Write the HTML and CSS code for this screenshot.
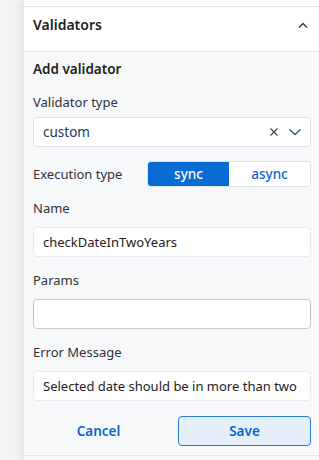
FILE: index.html
```html
<!DOCTYPE HTML>
<html>
<head>
<meta charset="utf-8">
<meta name="viewport" content="width=device-width, initial-scale=1.0">
<title>Validators</title>
<link rel="stylesheet" href="styles.css">
</head>
<body>

<div class="layout">
	<div class="sidebar"></div>

	<div class="panel">
		<div class="panel-top"></div>

		<!-- Заголовок секции -->
		<div class="section-head">
			<span>Validators</span>
			<svg class="caret" width="12" height="8" viewBox="0 0 12 8"><path d="M2 6.5 L6 2.5 L10 6.5" fill="none" stroke="#333" stroke-width="1.3"/></svg>
		</div>

		<div class="section-body">
			<h4>Add validator</h4>

			<div class="field first">
				<label>Validator type</label>
				<div class="select">
					<span class="select-value">custom</span>
					<svg width="10" height="10" viewBox="0 0 10 10"><path d="M1.5 1.5 L8.5 8.5 M8.5 1.5 L1.5 8.5" stroke="#444" stroke-width="1.2"/></svg>
					<svg width="14" height="10" viewBox="0 0 14 10"><path d="M1.5 2.5 L7 7.5 L12.5 2.5" fill="none" stroke="#2b5a8c" stroke-width="1.4"/></svg>
				</div>
			</div>

			<div class="row">
				<label>Execution type</label>
				<div class="toggle">
					<button class="on">sync</button>
					<button>async</button>
				</div>
			</div>

			<div class="field after-row">
				<label>Name</label>
				<input type="text" class="light" value="checkDateInTwoYears">
			</div>

			<div class="field">
				<label>Params</label>
				<input type="text" class="dark" value="">
			</div>

			<div class="field">
				<label>Error Message</label>
				<input type="text" class="light" value="Selected date should be in more than two years">
			</div>

			<div class="actions">
				<button class="btn-link">Cancel</button>
				<button class="btn-save">Save</button>
			</div>
		</div>
		<div class="panel-bottom"></div>
	</div>
</div>

</body>
</html>
```

FILE: styles.css
```css
body{
margin:0;
font-family:"Noto Sans", sans-serif;
font-size:13px;
color:#2b2f36;
background:#f2f3f5;
}

.layout {
  display: flex;
  height: 460px;
  overflow: hidden;
}
.sidebar {
  width: 24px;
  flex-shrink: 0;
  background: #f2f3f5;
}
.panel {
  flex: 1;
  display: flex;
  flex-direction: column;
  background: #f7f8fa;
  box-shadow: -4px 0 6px 0 rgba(0,0,0,0.06);
}
.panel-top {
  height: 6px;
  background: white;
  border-bottom: 1px solid #e3e7ed;
}
.section-head {
  height: 44px;
  background: white;
  border-bottom: 1px solid #e3e7ed;
  display: flex;
  align-items: flex-start;
  justify-content: space-between;
  padding: 0 10px 0 9px;
  font-size: 14px;
  font-weight: 600;
  color: #222;
}
.section-head span {
  margin-top: 8px;
}
.caret {
  margin-top: 14px;
}

.section-body {
  padding: 0 8px 0 9px;
  flex: 1;
}
.section-body h4 {
  margin: 7px 0 0 0;
  font-size: 13.5px;
  font-weight: 600;
  color: #222;
  line-height: 20px;
}

.field label, .row label {
  display: block;
  line-height: 20px;
  color: #2f333a;
}
.field {
  margin-top: 13px;
}
.field label {
  margin-bottom: 9px;
}
.field.first label {
  margin-bottom: 5px;
}
.field.after-row {
  margin-top: 11px;
}

.select {
  height: 28px;
  background: white;
  border: 1px solid #dfe3e9;
  border-radius: 4px;
  display: flex;
  align-items: center;
  padding: 0 8px 0 9px;
  gap: 9px;
}
.select-value {
  flex: 1;
  color: #1e3a5f;
  font-size: 13.5px;
}

.row {
  display: flex;
  align-items: center;
  justify-content: space-between;
  margin-top: 14px;
}
.toggle {
  display: flex;
  width: 164px;
  height: 26px;
  border: 1px solid #dfe3e9;
  border-radius: 4px;
  overflow: hidden;
  box-sizing: border-box;
}
.toggle button {
  flex: 1;
  border: none;
  background: white;
  color: #0a66cc;
  font-family: inherit;
  font-size: 13.5px;
  font-weight: 500;
  padding: 0;
}
.toggle button.on {
  background: #0a6bd3;
  color: white;
}

input[type=text] {
  display: block;
  width: 100%;
  box-sizing: border-box;
  height: 30px;
  border-radius: 4px;
  background: white;
  padding: 0 12px 0 9px;
  font-family: inherit;
  font-size: 13px;
  color: #222;
  outline: none;
}
input.light {
  border: 1px solid #e7eaef;
}
input.dark {
  border: 1px solid #c5cad2;
}

.actions {
  display: flex;
  gap: 14px;
  margin-top: 15px;
}
.actions button {
  flex: 1;
  height: 30px;
  font-family: inherit;
  font-size: 13.5px;
  font-weight: 600;
  color: #0a66cc;
  border-radius: 4px;
}
.btn-link {
  border: none;
  background: none;
}
.btn-save {
  background: #e5effa;
  border: 1px solid #2a7bd6;
}
.panel-bottom {
  height: 4px;
  border-top: 1px solid #e3e7ed;
  background: #f7f8fa;
}
```
